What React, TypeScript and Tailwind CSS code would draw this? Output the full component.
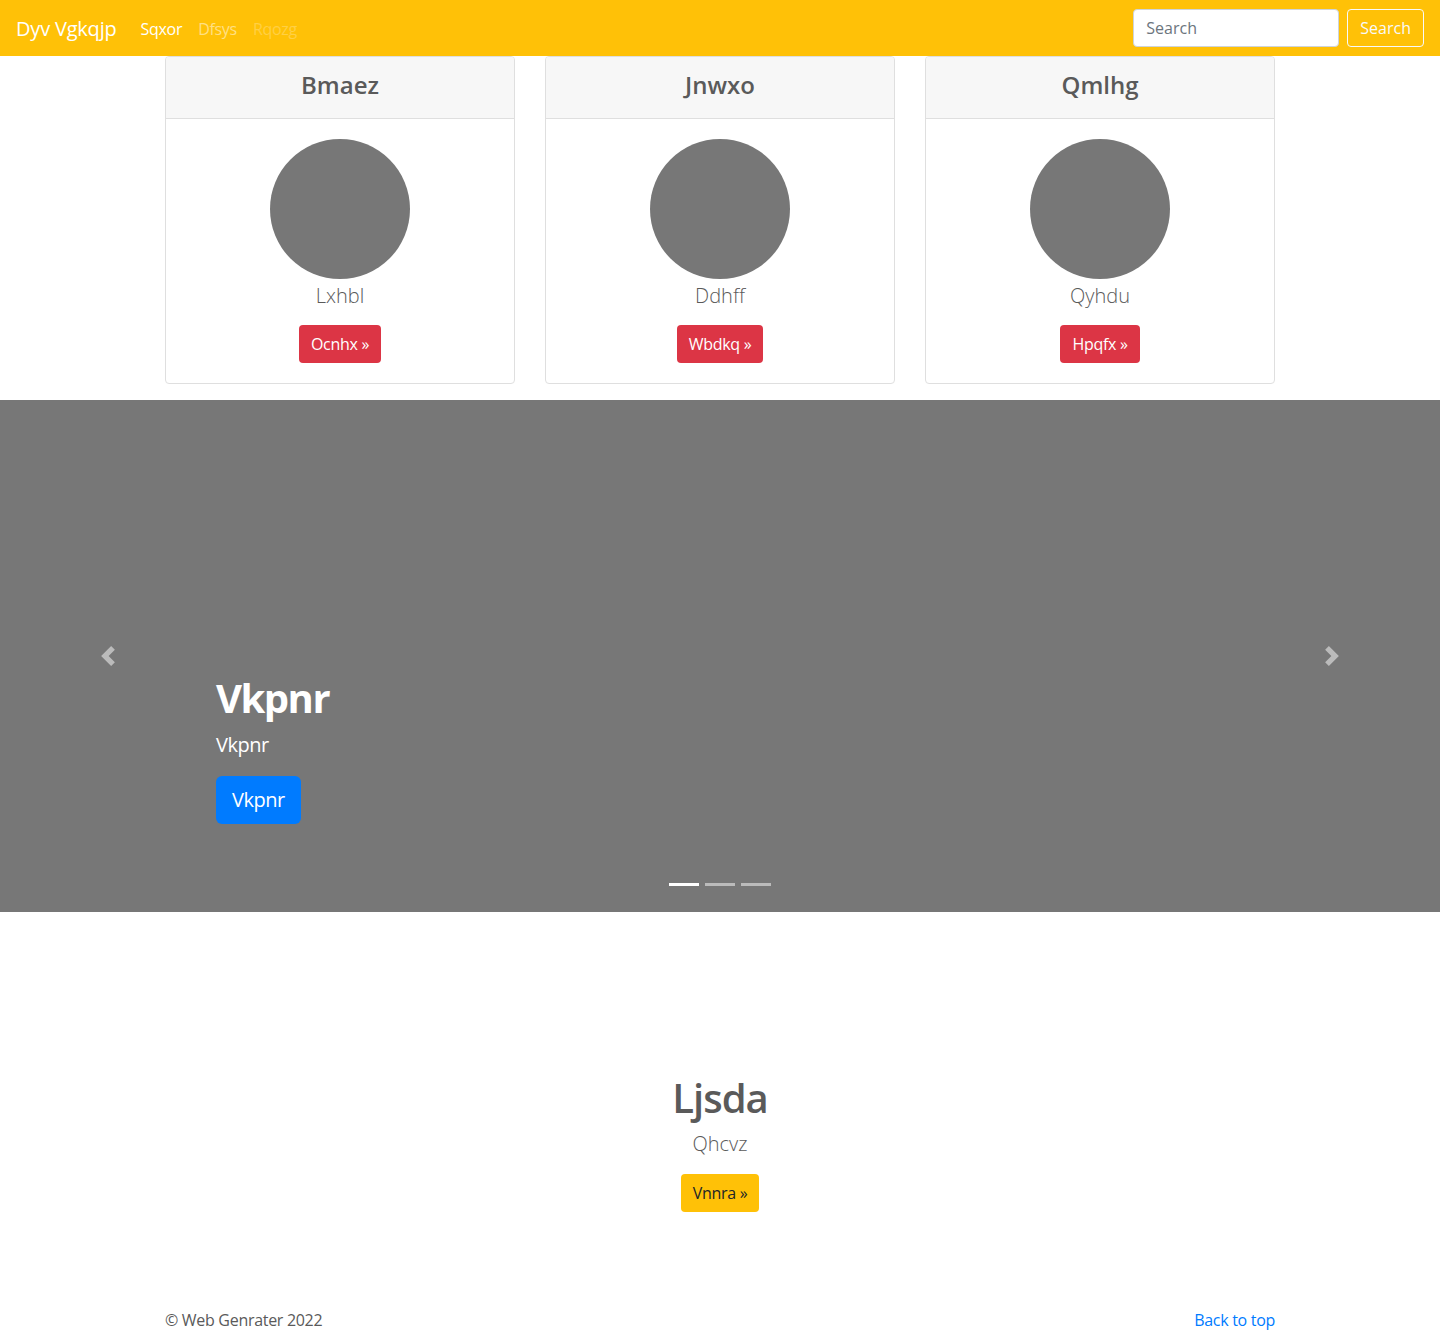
import React from 'react';

const cards = [
  { title: 'Bmaez', text: 'Lxhbl', cta: 'Ocnhx' },
  { title: 'Jnwxo', text: 'Ddhff', cta: 'Wbdkq' },
  { title: 'Qmlhg', text: 'Qyhdu', cta: 'Hpqfx' },
];

function Chevron({ dir }: { dir: 'left' | 'right' }) {
  return (
    <svg width="20" height="20" viewBox="0 0 8 8" fill="#fff" className="opacity-50">
      {dir === 'left' ? (
        <path d="M5.25 0l-4 4 4 4 1.5-1.5L4.25 4l2.5-2.5L5.25 0z" />
      ) : (
        <path d="M2.75 0l-1.5 1.5L3.75 4l-2.5 2.5L2.75 8l4-4-4-4z" />
      )}
    </svg>
  );
}

export default function App() {
  return (
    <div className="min-h-screen bg-white text-[#5a5a5a] font-['Open_Sans',sans-serif] text-base leading-6">
      {/* NAVBAR */}
      <header className="h-14 bg-[#ffc107] flex items-center justify-between px-4">
        <div className="flex items-center pt-[2px]">
          <a href="#" className="text-white text-xl leading-[30px] mr-4 tracking-[-0.2px]">Dyv Vgkqjp</a>
          <nav className="flex items-center tracking-[-0.3px]">
            <a href="#" className="px-2 text-white">Sqxor</a>
            <a href="#" className="px-2 text-white/50">Dfsys</a>
            <span className="px-2 text-white/25">Rqozg</span>
          </nav>
        </div>
        <form className="flex items-center" onSubmit={(e) => e.preventDefault()}>
          <input
            placeholder="Search"
            className="w-[206px] h-[38px] mr-2 px-3 rounded border border-[#ced4da] bg-white text-[#495057] placeholder:text-[#6c757d] outline-none"
          />
          <button className="h-[38px] px-3 rounded border border-[#f8f9fa] text-[#f8f9fa]">Search</button>
        </form>
      </header>

      {/* CARDS */}
      <div className="max-w-[1140px] mx-auto px-[15px]">
        <div className="grid grid-cols-3 gap-[30px]">
          {cards.map((c) => (
            <div key={c.title} className="mb-4 rounded border border-[#dfdfdf] bg-white text-center overflow-hidden">
              <div className="bg-[#f7f7f7] border-b border-[#dfdfdf] px-5 pt-[13px] pb-[11px]">
                <h4 className="text-2xl leading-[29px] font-semibold mb-2">{c.title}</h4>
              </div>
              <div className="p-5 flex flex-col items-center">
                <div className="w-[140px] h-[140px] rounded-full bg-[#777]" />
                <p className="text-xl leading-[30px] font-light pt-[2px] mb-[14px]">{c.text}</p>
                <a href="#" className="h-[38px] px-3 inline-flex items-center rounded bg-[#dc3545] text-white tracking-[-0.3px]">
                  {c.cta} »
                </a>
              </div>
            </div>
          ))}
        </div>
      </div>

      {/* CAROUSEL */}
      <section className="relative h-[512px] bg-[#777] overflow-hidden">
        <button className="absolute left-0 top-0 bottom-0 w-[15%] flex items-center justify-center">
          <Chevron dir="left" />
        </button>
        <button className="absolute right-0 top-0 bottom-0 w-[15%] flex items-center justify-center">
          <Chevron dir="right" />
        </button>
        <div className="h-full px-[15%] flex flex-col justify-end pb-[88px] text-white">
          <h1 className="text-[40px] leading-[48px] font-bold tracking-[-1.5px] mb-2">Vkpnr</h1>
          <p className="text-xl leading-[30px] mb-4 tracking-[-0.5px]">Vkpnr</p>
          <div>
            <a href="#" className="inline-flex items-center h-12 px-4 rounded-md bg-[#007bff] text-white text-xl tracking-[-0.5px]">Vkpnr</a>
          </div>
        </div>
        <div className="absolute bottom-[26px] left-0 right-0 flex justify-center gap-[6px]">
          <span className="w-[30px] h-[3px] bg-white" />
          <span className="w-[30px] h-[3px] bg-white/50" />
          <span className="w-[30px] h-[3px] bg-white/50" />
        </div>
      </section>

      {/* FEATURE */}
      <section className="pt-[162px] pb-[96px] text-center">
        <h1 className="text-[40px] leading-[48px] font-semibold tracking-[-1px] mb-2">Ljsda</h1>
        <p className="text-xl leading-[28px] font-light mb-4">Qhcvz</p>
        <a href="#" className="inline-flex items-center h-[38px] px-3 rounded bg-[#ffc107] text-[#212529] tracking-[-0.3px]">Vnnra »</a>
      </section>

      {/* FOOTER */}
      <footer className="max-w-[1140px] mx-auto px-[15px] flex justify-between leading-6 tracking-[-0.3px]">
        <p>© Web Genrater 2022</p>
        <a href="#" className="text-[#007bff]">Back to top</a>
      </footer>
    </div>
  );
}
